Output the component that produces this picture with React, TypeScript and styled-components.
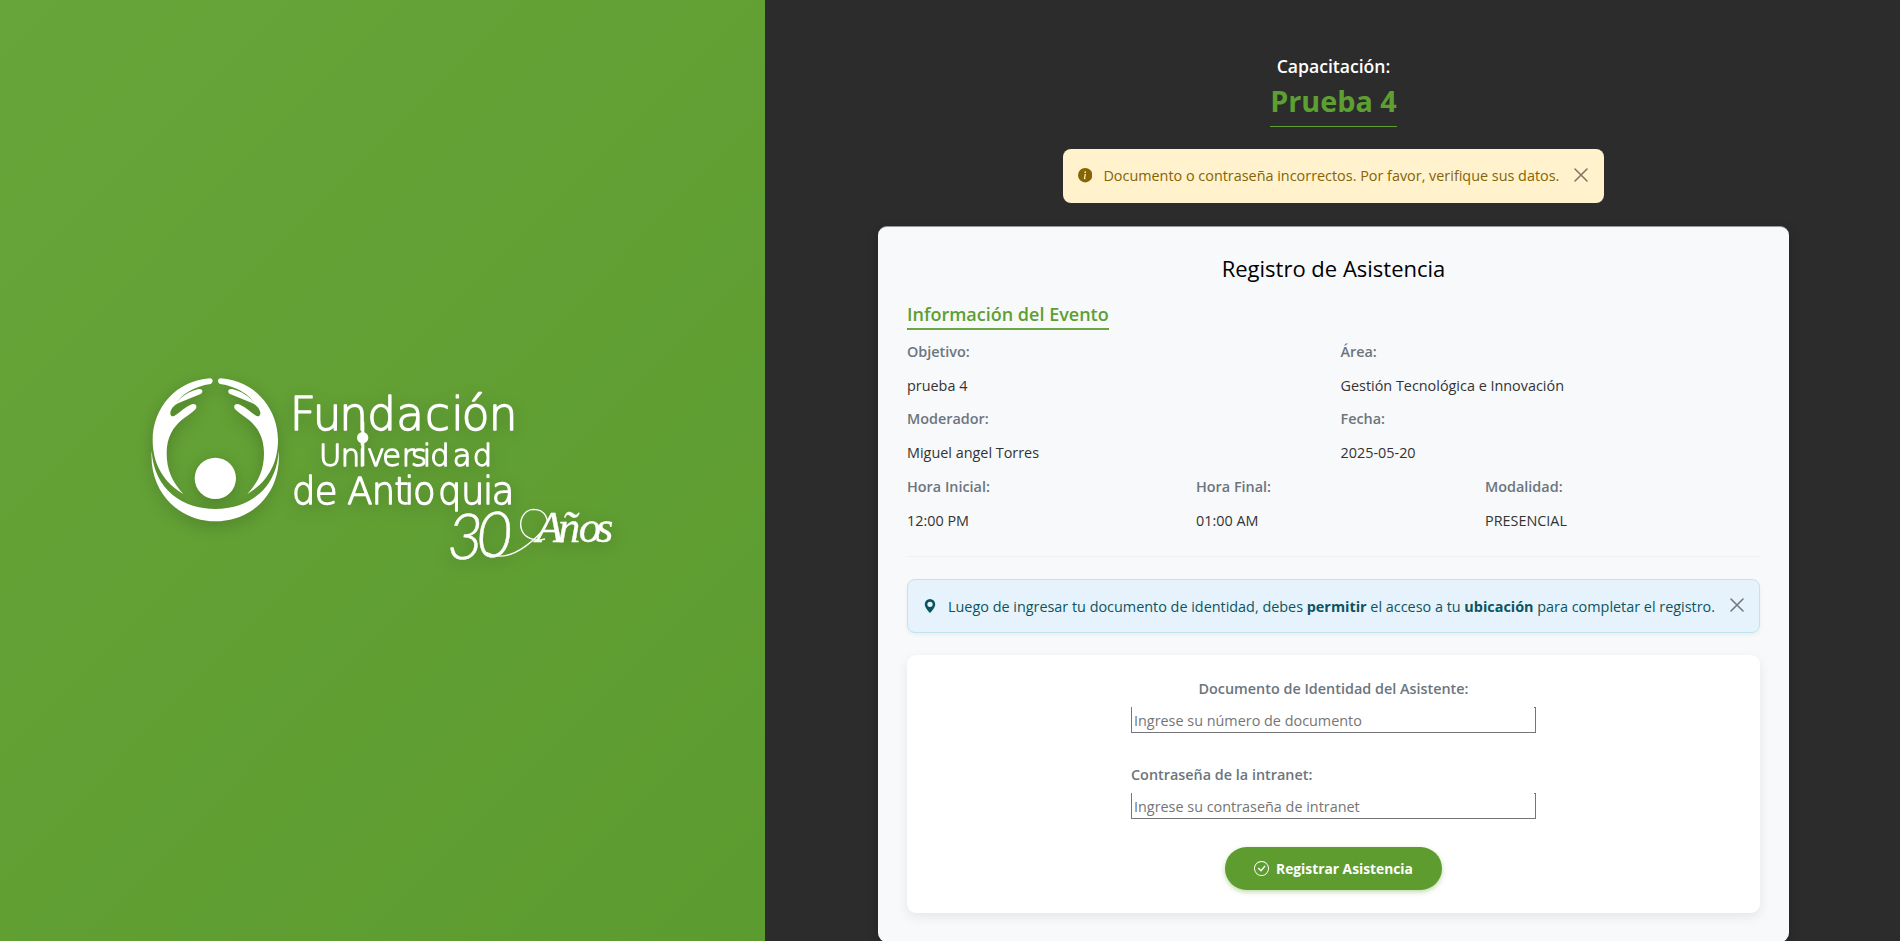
import React from 'react';
import styled, { createGlobalStyle } from 'styled-components';
import { BsInfoCircleFill, BsGeoAltFill, BsCheckCircle } from 'react-icons/bs';

const GlobalStyle = createGlobalStyle`
  *, *::before, *::after { box-sizing: border-box; }
  body {
    margin: 0;
    overflow: hidden;
    background: #2c2c2c;
    font-family: 'Open Sans', sans-serif;
    font-size: 14.4px;
    color: #333;
  }
`;

const Page = styled.div`
  display: flex;
  height: 941px;
  overflow: hidden;
`;

const BrandPanel = styled.aside`
  flex: 0 0 765px;
  display: flex;
  align-items: center;
  justify-content: center;
  background: linear-gradient(135deg, #67a439 0%, #5c9b2f 100%);
`;

const LogoSvg = styled.svg`
  width: 485px;
  height: 211px;
  overflow: visible;
  filter: drop-shadow(0 4px 8px rgba(0, 0, 0, 0.2));
`;

const RoundedLine = styled.text`
  font-family: 'DejaVu Sans Light', 'DejaVu Sans', sans-serif;
  font-weight: 200;
  fill: #fff;
  stroke: #fff;
  stroke-width: 4;
  stroke-linejoin: round;
`;

const NumberLine = styled.text`
  font-family: Lato, sans-serif;
  font-style: italic;
  font-weight: 300;
  fill: #fff;
  stroke: #fff;
  stroke-width: 1.5;
`;

const ScriptLine = styled.text`
  font-family: 'Liberation Serif', serif;
  font-style: italic;
  fill: #fff;
  stroke: #fff;
  stroke-width: 1;
`;

const Content = styled.main`
  flex: 1;
  display: flex;
  flex-direction: column;
  align-items: center;
  padding: 52px 0 0 2px;

  > * { flex: none; }
`;

const Kicker = styled.div`
  color: #fff;
  font-size: 17.6px;
  font-weight: 600;
  line-height: 28px;
`;

const EventTitle = styled.h1`
  margin: 0 0 22px;
  height: 47px;
  color: #5e9f31;
  border-bottom: 1px solid #5e9f31;
  font-size: 28.8px;
  font-weight: 700;
  line-height: 41px;
`;

const Alert = styled.div<{ $kind: 'warning' | 'info' }>`
  display: flex;
  align-items: center;
  height: 54px;
  border-radius: 8px;
  white-space: nowrap;
  ${({ $kind }) =>
    $kind === 'warning'
      ? 'width: 541px; padding: 0 16px 1px 15px; background: #fff2cd; color: #856404;'
      : 'padding: 0 15px 0 15px; background: #e6f3fd; color: #0c5460; border: 1px solid #bee5eb; box-shadow: 0 2px 4px rgba(0,0,0,.05);'}

  > svg:first-child { flex: none; margin-right: 11px; }
`;

const AlertText = styled.span`
  flex: 1;
`;

const CloseButton = styled.button`
  display: flex;
  padding: 0;
  margin-bottom: 2px;
  border: 0;
  background: none;
  color: #000;
  opacity: 0.5;
`;

const Card = styled.section`
  width: 911px;
  height: 716px;
  margin-top: 23px;
  padding: 23px 29px 0;
  background: #f8f9fb;
  border-top: 1px solid #96979a;
  border-radius: 9px;
  box-shadow: 0 4px 12px rgba(0, 0, 0, 0.2);
`;

const CardTitle = styled.h2`
  margin: 0;
  text-align: center;
  color: #000;
  font-size: 22px;
  font-weight: 400;
  line-height: 36px;
`;

const SectionTitle = styled.h3`
  width: fit-content;
  height: 31px;
  margin: 13px 0 7px;
  color: #5e9f31;
  border-bottom: 2px solid #6aa641;
  font-size: 18px;
  font-weight: 600;
  line-height: 31px;
`;

const Fields = styled.div<{ $columns: number }>`
  display: grid;
  grid-template-columns: repeat(${({ $columns }) => $columns}, 1fr);
  width: 867px;
`;

const Field = styled.div`
  height: 67.4px;
  line-height: 30px;
`;

const FieldLabel = styled.div`
  height: 34px;
  font-weight: 600;
  color: #6c757d;
`;

const Divider = styled.hr`
  margin: 17px 0 22px;
  border: 0;
  border-top: 1px solid #eff0f2;
`;

const Form = styled.form`
  display: flex;
  flex-direction: column;
  align-items: center;
  height: 258px;
  margin-top: 22px;
  padding-top: 21px;
  background: #fff;
  border-radius: 9px;
  box-shadow: 0 4px 12px rgba(0, 0, 0, 0.08);
`;

const Group = styled.div<{ $centered?: boolean }>`
  width: 405px;
  height: 85.5px;
  text-align: ${({ $centered }) => ($centered ? 'center' : 'left')};
`;

const InputLabel = styled.label`
  display: block;
  height: 31px;
  line-height: 25px;
  font-weight: 600;
  color: #6c757d;
`;

const Input = styled.input`
  display: block;
  width: 405px;
  height: 26px;
  padding: 2px 2px 0;
  outline: 0;
  border: 1px solid #76767a;
  border-top: 0;
  background: linear-gradient(#76767a, #76767a) right top / 1px 1px no-repeat #fff;
  font: inherit;

  &::placeholder { color: #757575; opacity: 1; }
`;

const SubmitButton = styled.button`
  display: flex;
  align-items: center;
  justify-content: center;
  gap: 7px;
  width: 217px;
  height: 43px;
  border: 0;
  border-radius: 22px;
  background: #5e9c30;
  color: #fff;
  font: inherit;
  font-size: 13.8px;
  font-weight: 700;
  box-shadow: 0 2px 5px rgba(94, 156, 48, 0.4);
`;

function Logo() {
  const arm =
    'M210 40C110 46 38 128 38 225C38 300 74 354 130 387C95 350 80 312 80 265C80 215 100 187 125 165C140 153 154 144 165 134C175 124 166 112 152 119C135 127 120 141 106 151C98 158 90 152 91 143C93 129 104 117 125 110L180 88C192 82 188 70 176 72C148 78 120 96 104 121C124 86 165 64 211 57C221 54 220 40 210 40Z';
  return (
    <LogoSvg viewBox="0 0 1455 633" role="img" aria-label="Fundación Universidad de Antioquia 30 Años">
      <g fill="#fff">
        <path d={arm} />
        <path d={arm} transform="translate(452 0) scale(-1 1)" />
        <path d="M35 258C42 375 130 432 226 432C322 432 410 375 416 258C425 390 332 469 226 469C120 469 27 385 35 258Z" />
        <circle cx="226" cy="340" r="62" />
        <circle cx="668" cy="218" r="17" />
        <path d="M664 170h9v133h-9z" />
      </g>
      <RoundedLine fontSize="136" y="194" x="449 518 598 682 769 855 934 965 1046">Fundación</RoundedLine>
      <RoundedLine fontSize="92" y="303" x="537 602 654 680 727 785 813 848 871 938 998">Universidad</RoundedLine>
      <RoundedLine fontSize="111" y="418" x="456 524 590 622 695 763 793 819 894 963 1029 1055">de Antioquia</RoundedLine>
      <NumberLine fontSize="188" y="582 576" x="921 1009">30</NumberLine>
      <ScriptLine fontSize="134" y="532 532 531 530" x="1188 1254 1316 1368">Años</ScriptLine>
      <path
        d="M1040 563C1090 590 1150 560 1210 495C1235 467 1215 433 1180 433C1148 435 1136 470 1145 495C1155 522 1190 530 1215 522"
        fill="none"
        stroke="#fff"
        strokeWidth="4"
      />
    </LogoSvg>
  );
}

function Close() {
  return (
    <CloseButton type="button" aria-label="Cerrar">
      <svg width="14" height="14" viewBox="0 0 14 14" stroke="currentColor" strokeWidth="1.6" strokeLinecap="round">
        <path d="M1 1l12 12M13 1L1 13" />
      </svg>
    </CloseButton>
  );
}

function Item({ label, value }: { label: string; value: string }) {
  return (
    <Field>
      <FieldLabel>{label}</FieldLabel>
      {value}
    </Field>
  );
}

export default function App() {
  return (
    <Page>
      <GlobalStyle />
      <BrandPanel>
        <Logo />
      </BrandPanel>
      <Content>
        <Kicker>Capacitación:</Kicker>
        <EventTitle>Prueba 4</EventTitle>
        <Alert $kind="warning">
          <BsInfoCircleFill size={14.4} />
          <AlertText>Documento o contraseña incorrectos. Por favor, verifique sus datos.</AlertText>
          <Close />
        </Alert>
        <Card>
          <CardTitle>Registro de Asistencia</CardTitle>
          <SectionTitle>Información del Evento</SectionTitle>
          <Fields $columns={2}>
            <Item label="Objetivo:" value="prueba 4" />
            <Item label="Área:" value="Gestión Tecnológica e Innovación" />
            <Item label="Moderador:" value="Miguel angel Torres" />
            <Item label="Fecha:" value="2025-05-20" />
          </Fields>
          <Fields $columns={3}>
            <Item label="Hora Inicial:" value="12:00 PM" />
            <Item label="Hora Final:" value="01:00 AM" />
            <Item label="Modalidad:" value="PRESENCIAL" />
          </Fields>
          <Divider />
          <Alert $kind="info">
            <BsGeoAltFill size={14} />
            <AlertText>
              Luego de ingresar tu documento de identidad, debes <b>permitir</b> el acceso a tu <b>ubicación</b> para
              completar el registro.
            </AlertText>
            <Close />
          </Alert>
          <Form>
            <Group $centered>
              <InputLabel htmlFor="documento">Documento de Identidad del Asistente:</InputLabel>
              <Input id="documento" placeholder="Ingrese su número de documento" />
            </Group>
            <Group>
              <InputLabel htmlFor="clave">Contraseña de la intranet:</InputLabel>
              <Input id="clave" type="password" placeholder="Ingrese su contraseña de intranet" />
            </Group>
            <SubmitButton type="button">
              <BsCheckCircle size={15} />
              Registrar Asistencia
            </SubmitButton>
          </Form>
        </Card>
      </Content>
    </Page>
  );
}
